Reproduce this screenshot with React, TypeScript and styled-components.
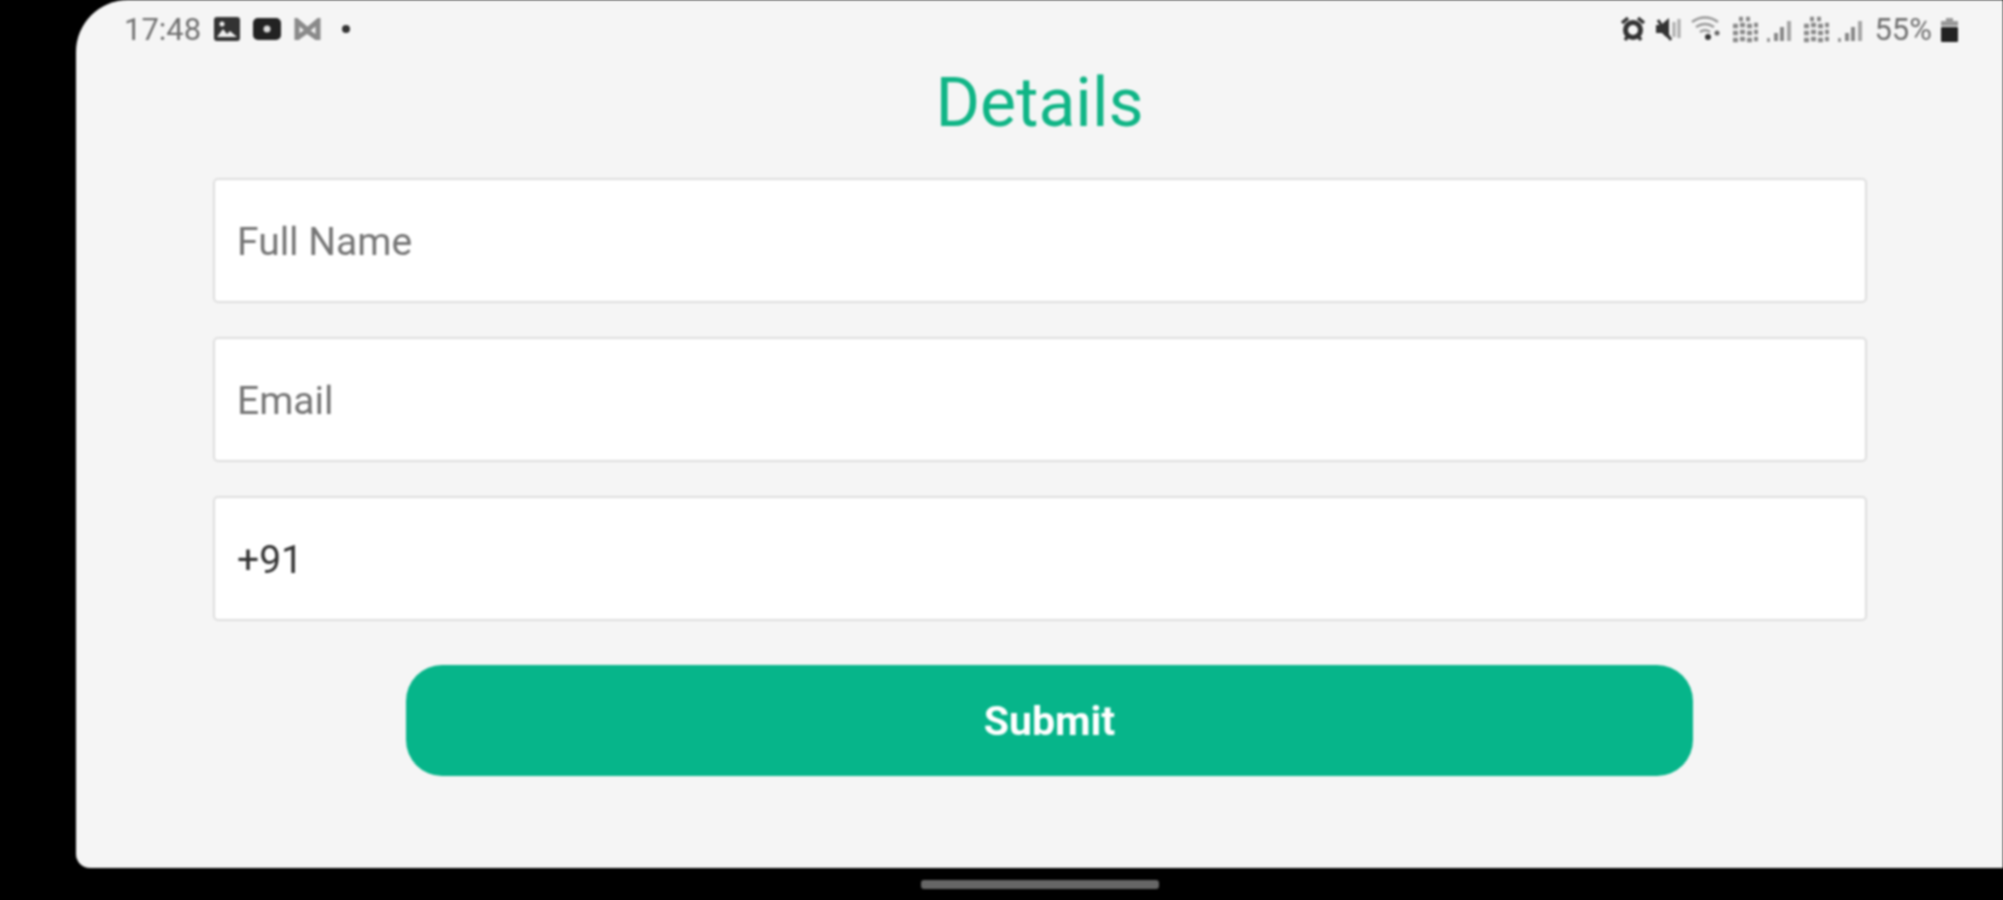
import React from "react";
import styled, { createGlobalStyle } from "styled-components";

const GlobalStyle = createGlobalStyle`
  html, body {
    margin: 0;
    padding: 0;
    height: 900px;
    background: #000;
    overflow: hidden;
    font-family: Roboto, "Liberation Sans", sans-serif;
  }
`;

const Page = styled.div`
  width: 2003px;
  height: 900px;
  background: #000;
  padding-left: 76px;
  box-sizing: border-box;
  display: flex;
  flex-direction: column;
  filter: blur(1px);
`;

const Screen = styled.div`
  height: 868px;
  flex: none;
  background: #f5f5f5;
  border-radius: 52px 0 0 14px;
  display: flex;
  flex-direction: column;
`;

const StatusBar = styled.div`
  height: 58px;
  flex: none;
  box-sizing: border-box;
  padding: 0 45px 0 48px;
  display: flex;
  align-items: center;
  justify-content: space-between;
`;

const StatusGroup = styled.div<{ $gap: number }>`
  display: flex;
  align-items: center;
  gap: ${(p) => p.$gap}px;
`;

const StatusText = styled.span`
  font-size: 31px;
  color: #707070;
`;

const Title = styled.h1`
  margin: 0;
  height: 120px;
  flex: none;
  display: flex;
  align-items: center;
  justify-content: center;
  padding-bottom: 31px;
  box-sizing: border-box;
  font-size: 68px;
  font-weight: 400;
  color: #10b586;
`;

const Form = styled.div`
  padding: 0 136px 0 137px;
  display: flex;
  flex-direction: column;
  gap: 34px;
`;

const Field = styled.div<{ $filled?: boolean }>`
  height: 125px;
  box-sizing: border-box;
  background: #fff;
  border: 2px solid #dedede;
  border-radius: 5px;
  padding: 3px 22px 0;
  display: flex;
  align-items: center;
  font-size: 39px;
  color: ${(p) => (p.$filled ? "#333" : "#757575")};
`;

const SubmitButton = styled.button`
  display: block;
  width: 1287px;
  height: 111px;
  margin: 44px 0 0 330px;
  border: none;
  border-radius: 36px;
  background: #06b58a;
  color: #fff;
  font-family: inherit;
  font-size: 41px;
  font-weight: 700;
`;

const NavBar = styled.div`
  flex: 1;
  display: flex;
  justify-content: center;
  padding-top: 12px;
`;

const NavPill = styled.div`
  width: 238px;
  height: 9px;
  border-radius: 3px;
  background: #666;
`;

const DotSvg = styled.svg`
  margin-left: 7px;
`;

const PictureIcon = () => (
  <svg width="26" height="24" viewBox="0 0 26 24">
    <rect width="26" height="24" rx="3" fill="#333" />
    <path d="M3 20l6-8 4 5 3-3 7 6z" fill="#eee" />
    <circle cx="8" cy="7" r="2.5" fill="#eee" />
  </svg>
);

const VideoIcon = () => (
  <svg width="28" height="22" viewBox="0 0 28 22">
    <rect width="28" height="22" rx="5" fill="#222" />
    <circle cx="14" cy="11" r="3.5" fill="#ddd" />
  </svg>
);

const MailIcon = () => (
  <svg width="27" height="22" viewBox="0 0 27 22" fill="none" stroke="#8a8a8a" strokeWidth="5">
    <path d="M3 22V3l10.5 9L24 3v19M3 20l10-7 10 7" />
  </svg>
);

const DotIcon = () => (
  <DotSvg width="10" height="10" viewBox="0 0 10 10">
    <circle cx="5" cy="5" r="4" fill="#333" />
  </DotSvg>
);

const AlarmIcon = () => (
  <svg width="26" height="26" viewBox="0 0 26 26" fill="none" stroke="#333">
    <circle cx="13" cy="14" r="7.5" strokeWidth="5" />
    <path d="M2 7l6-5M24 7l-6-5M5 24l3-4M21 24l-3-4" strokeWidth="3.5" />
  </svg>
);

const MuteIcon = () => (
  <svg width="27" height="26" viewBox="0 0 27 26">
    <path d="M1 9h5l8-7v21l-4-3-3-3H1z" fill="#333" />
    <path d="M3 4l13 20" stroke="#333" strokeWidth="3" />
    <path d="M19 6v15M24 3v19" stroke="#aaa" strokeWidth="3" />
  </svg>
);

const WifiIcon = () => (
  <svg width="32" height="26" viewBox="0 0 32 26" fill="none">
    <path d="M1 6c8-6 18-6 26 0M5 11c6-4 12-4 18 0M9 16c3-2 7-2 10 0" stroke="#999" strokeWidth="2.5" />
    <circle cx="17" cy="21" r="3" fill="#333" />
    <circle cx="26" cy="17" r="2.5" fill="#666" />
  </svg>
);

const SignalIcon = () => (
  <svg width="62" height="28" viewBox="0 0 62 28" fill="none">
    <path d="M7 4h4M14 4h4M1 11h5M8 10h5M15 11h5M22 10h4M1 18h5M8 17h5M15 18h5M22 17h4M1 25h5M8 24h5M15 25h5M22 24h4" stroke="#8a8a8a" strokeWidth="4.5" />
    <path d="M35 25h3" stroke="#999" strokeWidth="4" />
    <path d="M44 26v-8M50 26v-14" stroke="#888" strokeWidth="4" />
    <path d="M57 26V6" stroke="#a5a5a5" strokeWidth="4" />
  </svg>
);

const BatteryIcon = () => (
  <svg width="17" height="28" viewBox="0 0 17 28">
    <path d="M5 3h7v3h5v5H0V6h5z" fill="#999" />
    <rect y="12" width="17" height="15" rx="1" fill="#222" />
  </svg>
);

export default function App() {
  return (
    <Page>
      <GlobalStyle />
      <Screen>
        <StatusBar>
          <StatusGroup $gap={13}>
            <StatusText>17:48</StatusText>
            <PictureIcon />
            <VideoIcon />
            <MailIcon />
            <DotIcon />
          </StatusGroup>
          <StatusGroup $gap={9}>
            <AlarmIcon />
            <MuteIcon />
            <WifiIcon />
            <SignalIcon />
            <SignalIcon />
            <StatusText>55%</StatusText>
            <BatteryIcon />
          </StatusGroup>
        </StatusBar>
        <Title>Details</Title>
        <Form>
          <Field>Full Name</Field>
          <Field>Email</Field>
          <Field $filled>+91</Field>
        </Form>
        <SubmitButton>Submit</SubmitButton>
      </Screen>
      <NavBar>
        <NavPill />
      </NavBar>
    </Page>
  );
}
